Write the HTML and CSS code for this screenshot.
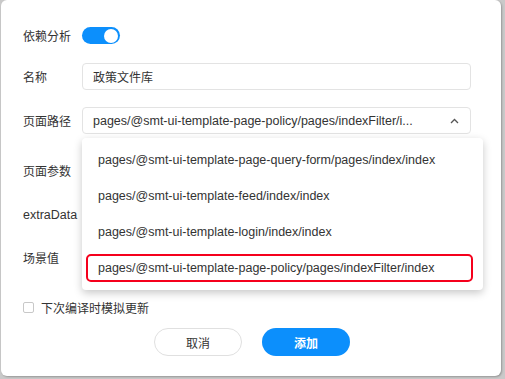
FILE: index.html
```html
<!DOCTYPE html>
<html lang="zh">
<head>
<meta charset="utf-8">
<link rel="stylesheet" href="styles.css">
</head>
<body>
<div class="dialog">
  <div class="form">
    <div class="row r1">
      <div class="label">依赖分析</div>
      <div class="switch"><span class="knob"></span></div>
    </div>
    <div class="row r2">
      <div class="label">名称</div>
      <div class="input">政策文件库</div>
    </div>
    <div class="row r3">
      <div class="label">页面路径</div>
      <div class="select-wrap">
        <div class="input select">
          <span class="select-text">pages/@smt-ui-template-page-policy/pages/indexFilter/i...</span>
          <svg class="caret" width="9" height="6" viewBox="0 0 9 6"><path d="M1 5 L4.5 1.5 L8 5" fill="none" stroke="#555" stroke-width="1.3"/></svg>
        </div>
        <div class="dropdown">
          <div class="item">pages/@smt-ui-template-page-query-form/pages/index/index</div>
          <div class="item">pages/@smt-ui-template-feed/index/index</div>
          <div class="item">pages/@smt-ui-template-login/index/index</div>
          <div class="item item-marked"><span class="mark">pages/@smt-ui-template-page-policy/pages/indexFilter/index</span></div>
        </div>
      </div>
    </div>
    <div class="row r4">
      <div class="label">页面参数</div>
    </div>
    <div class="row r5">
      <div class="label latin">extraData</div>
    </div>
    <div class="row r6">
      <div class="label">场景值</div>
    </div>
    <div class="row r7">
      <span class="checkbox"></span>
      <span class="check-label">下次编译时模拟更新</span>
    </div>
    <div class="buttons">
      <button class="btn btn-cancel">取消</button>
      <button class="btn btn-primary">添加</button>
    </div>
  </div>
</div>
</body>
</html>
```
FILE: styles.css
```css
html, body {
  margin: 0;
  padding: 0;
}
body {
  width: 505px;
  height: 379px;
  background: #c9c9c9;
  font-family: "Liberation Sans", "Noto Sans CJK SC", sans-serif;
  font-size: 12px;
  color: #333;
  overflow: hidden;
}
.dialog {
  margin-left: 1px;
  width: 500px;
  height: 376px;
  background: #fff;
  border-radius: 6px;
  box-shadow: 1px 1px 2px rgba(0,0,0,0.25);
  box-sizing: border-box;
  padding: 22px 0 0 22px;
}
.form {
  display: flex;
  flex-direction: column;
}
.row {
  display: flex;
  align-items: center;
  height: 27px;
}
.r2 { margin-top: 14px; }
.r3 { margin-top: 17px; }
.r4 { margin-top: 23px; }
.r5 { margin-top: 17px; }
.r6 { margin-top: 16px; }
.r7 { margin-top: 23px; }
.label {
  width: 59px;
  flex: none;
  font-family: "Noto Sans CJK SC", sans-serif;
  font-size: 12px;
  color: #333;
}
.label.latin {
  font-family: "Liberation Sans", sans-serif;
  font-size: 12.5px;
}
.switch {
  width: 38px;
  height: 17px;
  border-radius: 9px;
  background: #0c8ffc;
  position: relative;
}
.knob {
  position: absolute;
  right: 2px;
  top: 1.5px;
  width: 14px;
  height: 14px;
  border-radius: 50%;
  background: #fff;
}
.input {
  width: 389px;
  height: 27px;
  box-sizing: border-box;
  border: 1px solid #e3e3e3;
  border-radius: 4px;
  padding: 0 10px;
  display: flex;
  align-items: center;
  font-family: "Noto Sans CJK SC", sans-serif;
  font-size: 12px;
}
.select-wrap {
  position: relative;
}
.select {
  justify-content: space-between;
  font-family: "Liberation Sans", sans-serif;
  font-size: 12.5px;
  padding-right: 11px;
}
.caret { flex: none; }
.dropdown {
  position: absolute;
  left: 0;
  top: 31px;
  width: 401px;
  padding: 4px 0;
  background: #fff;
  border-radius: 4px;
  box-shadow: 0 3px 9px rgba(0,0,0,0.22);
  z-index: 2;
}
.item {
  height: 36px;
  display: flex;
  align-items: center;
  padding-left: 16px;
  font-family: "Liberation Sans", sans-serif;
  font-size: 12.5px;
  color: #333;
}
.item-marked {
  padding: 4px 10px 4px 4px;
  box-sizing: border-box;
}
.mark {
  flex: 1;
  height: 100%;
  box-sizing: border-box;
  border: 2px solid #f5001c;
  border-radius: 5px;
  padding-left: 10px;
  display: flex;
  align-items: center;
}
.checkbox {
  width: 11px;
  height: 11px;
  border: 1px solid #c8c8c8;
  border-radius: 2px;
  box-sizing: border-box;
  margin-right: 7px;
}
.check-label {
  font-family: "Noto Sans CJK SC", sans-serif;
  font-size: 12px;
}
.buttons {
  display: flex;
  gap: 20px;
  margin-top: 7px;
  padding-left: 131px;
}
.btn {
  width: 88px;
  height: 28px;
  border-radius: 14px;
  font-family: "Noto Sans CJK SC", sans-serif;
  font-size: 12px;
  cursor: pointer;
}
.btn-cancel {
  background: #fff;
  border: 1px solid #e0e0e0;
  color: #333;
}
.btn-primary {
  background: #0c8ffc;
  border: none;
  color: #fff;
  font-weight: bold;
}
```
